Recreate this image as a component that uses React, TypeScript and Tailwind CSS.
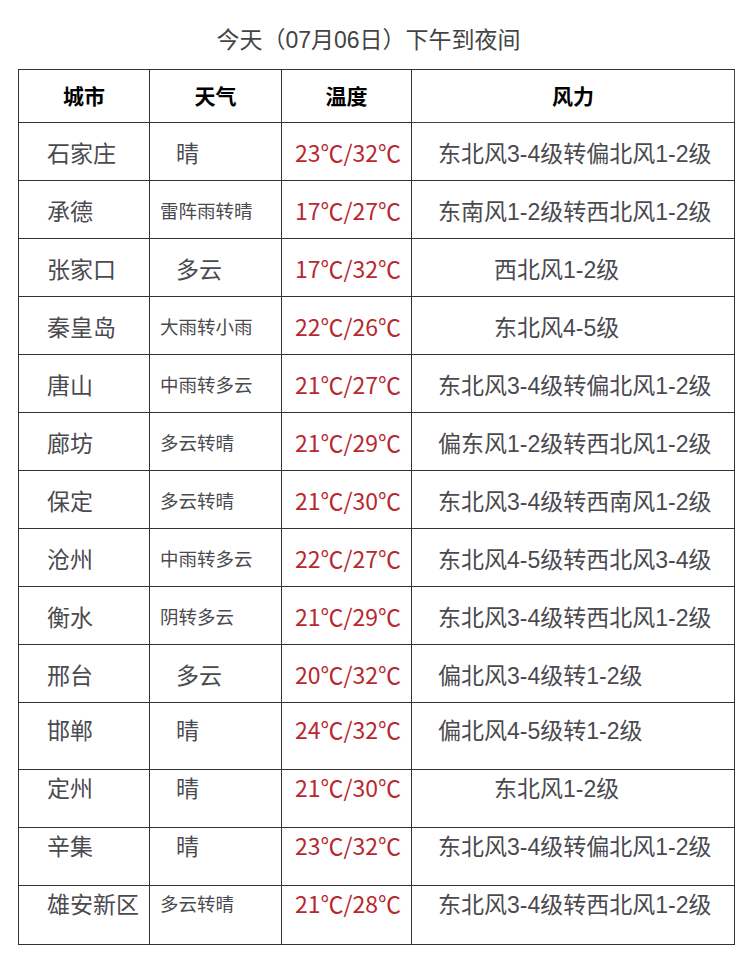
import React from "react";

type Row = {
  city: string;
  weather: string;
  temp: string;
  wind: string;
  windShort?: boolean;
  h: string;
  pt: string;
};

const rows: Row[] = [
  { city: "石家庄", weather: "晴", temp: "23℃/32℃", wind: "东北风3-4级转偏北风1-2级", h: "h-[58px]", pt: "pt-[17px]" },
  { city: "承德", weather: "雷阵雨转晴", temp: "17℃/27℃", wind: "东南风1-2级转西北风1-2级", h: "h-[58px]", pt: "pt-[17px]" },
  { city: "张家口", weather: "多云", temp: "17℃/32℃", wind: "西北风1-2级", windShort: true, h: "h-[58px]", pt: "pt-[17px]" },
  { city: "秦皇岛", weather: "大雨转小雨", temp: "22℃/26℃", wind: "东北风4-5级", windShort: true, h: "h-[58px]", pt: "pt-[17px]" },
  { city: "唐山", weather: "中雨转多云", temp: "21℃/27℃", wind: "东北风3-4级转偏北风1-2级", h: "h-[58px]", pt: "pt-[17px]" },
  { city: "廊坊", weather: "多云转晴", temp: "21℃/29℃", wind: "偏东风1-2级转西北风1-2级", h: "h-[58px]", pt: "pt-[17px]" },
  { city: "保定", weather: "多云转晴", temp: "21℃/30℃", wind: "东北风3-4级转西南风1-2级", h: "h-[58px]", pt: "pt-[17px]" },
  { city: "沧州", weather: "中雨转多云", temp: "22℃/27℃", wind: "东北风4-5级转西北风3-4级", h: "h-[58px]", pt: "pt-[17px]" },
  { city: "衡水", weather: "阴转多云", temp: "21℃/29℃", wind: "东北风3-4级转西北风1-2级", h: "h-[58px]", pt: "pt-[17px]" },
  { city: "邢台", weather: "多云", temp: "20℃/32℃", wind: "偏北风3-4级转1-2级", h: "h-[58px]", pt: "pt-[17px]" },
  { city: "邯郸", weather: "晴", temp: "24℃/32℃", wind: "偏北风4-5级转1-2级", h: "h-[67px]", pt: "pt-[14px]" },
  { city: "定州", weather: "晴", temp: "21℃/30℃", wind: "东北风1-2级", windShort: true, h: "h-[58px]", pt: "pt-[5px]" },
  { city: "辛集", weather: "晴", temp: "23℃/32℃", wind: "东北风3-4级转偏北风1-2级", h: "h-[58px]", pt: "pt-[5px]" },
  { city: "雄安新区", weather: "多云转晴", temp: "21℃/28℃", wind: "东北风3-4级转西北风1-2级", h: "h-[59px]", pt: "pt-[5px]" },
];

const font = "font-['Liberation_Sans','Noto_Sans_CJK_SC',sans-serif]";

export default function App() {
  return (
    <div className={`w-[750px] h-[970px] bg-white ${font}`}>
      <div className="h-[69px] pt-[25px] pr-[13px] text-center text-[23px] leading-[30px] text-[#444]">
        今天（07月06日）下午到夜间
      </div>
      <div className="ml-[18px] w-[717px] border-l border-t border-[#333]">
        <div className="grid grid-cols-[131px_132px_130px_323px] h-[53px] text-[21px] font-bold text-black leading-[28px]">
          <div className="border-r border-b border-[#333] pt-[13px] text-center">城市</div>
          <div className="border-r border-b border-[#333] pt-[13px] text-center">天气</div>
          <div className="border-r border-b border-[#333] pt-[13px] text-center">温度</div>
          <div className="border-r border-b border-[#444] pt-[13px] text-center">风力</div>
        </div>
        {rows.map((r) => {
          const shortW = r.weather.length <= 2;
          return (
            <div
              key={r.city}
              className={`grid grid-cols-[131px_132px_130px_323px] ${r.h} text-[23px] leading-[28px] text-[#4a4a4f]`}
            >
              <div className={`border-r border-b border-[#333] pl-[28px] whitespace-nowrap ${r.pt}`}>{r.city}</div>
              <div className={`border-r border-b border-[#333] whitespace-nowrap ${r.pt}`}>
                {shortW ? (
                  <span className="block pl-[26px]">{r.weather}</span>
                ) : (
                  <span className="block pl-[10px] text-[18.5px]">{r.weather}</span>
                )}
              </div>
              <div className={`border-r border-b border-[#333] pl-[13px] whitespace-nowrap text-[#b8282e] ${r.pt}`}>
                <span className="font-['Noto_Sans_CJK_SC',sans-serif] leading-none">{r.temp}</span>
              </div>
              <div className={`border-r border-b border-[#333] whitespace-nowrap ${r.windShort ? "pl-[82px]" : "pl-[26px]"} ${r.pt}`}>
                {r.wind}
              </div>
            </div>
          );
        })}
      </div>
    </div>
  );
}
